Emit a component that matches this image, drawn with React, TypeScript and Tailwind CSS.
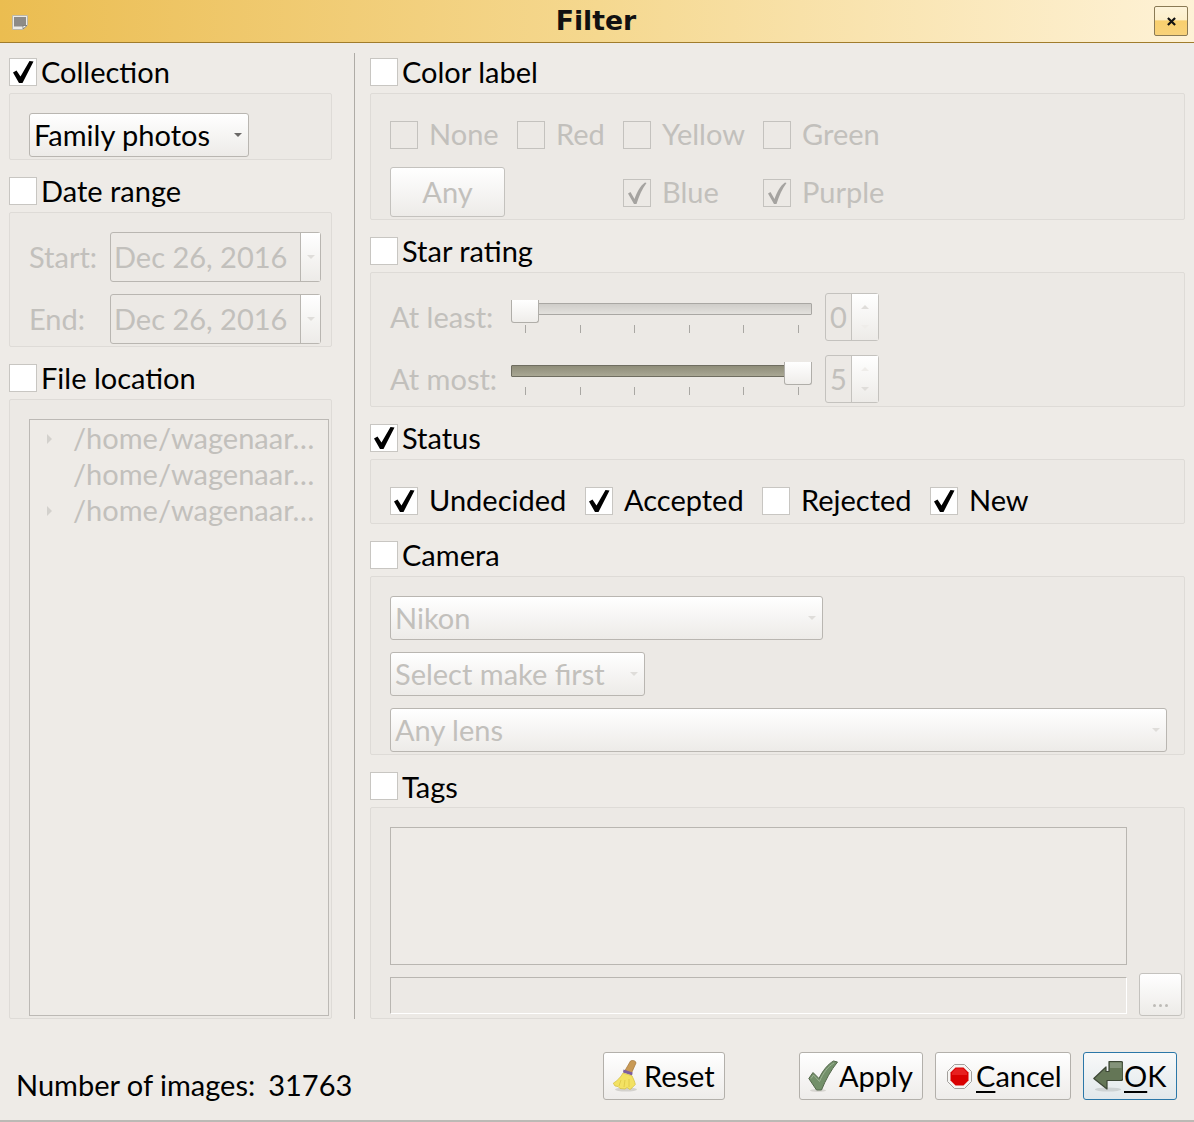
import React from "react";

const Check: React.FC<{ dim?: boolean }> = ({ dim }) => (
  <svg viewBox="0 0 28 28" className="absolute inset-[-1px] h-[28px] w-[28px]">
    {dim ? (
      <path d="M5 14.5 L7.5 13 L11.5 20 C14 13 17 7 22 3.5 L23.5 4 C19 10 16 17 13.5 25 L11 25 Z" fill="#a5a3a0" />
    ) : (
      <path d="M4 14.5 L7.5 12.5 L11.5 18.5 L20.5 3 L24.5 3.5 L13.5 25 L10 25 Z" fill="#000" />
    )}
  </svg>
);

type BoxProps = { checked?: boolean; disabled?: boolean };

const Box: React.FC<BoxProps> = ({ checked, disabled }) => (
  <span
    className={
      "relative block h-[28px] w-[28px] shrink-0 border " +
      (disabled ? "border-[#c4c2be]" : "border-[#c8c6c2] bg-white")
    }
  >
    {checked && <Check dim={disabled} />}
  </span>
);

const CheckItem: React.FC<BoxProps & { label: string }> = ({ label, checked, disabled }) => (
  <div className="flex h-[28px] items-center gap-[12px]">
    <Box checked={checked} disabled={disabled} />
    <span className={"ml-[-1px] mt-[-2px] " + (disabled ? "text-[#c2c0bc]" : "text-black")}>{label}</span>
  </div>
);

const Arrow: React.FC<{ dim?: boolean }> = ({ dim }) => (
  <span
    className={
      "block h-0 w-0 border-x-[4px] border-t-[4px] border-x-transparent " +
      (dim ? "border-t-[#dfddda]" : "border-t-[#6b6967]")
    }
  />
);

const Group: React.FC<{
  label: string;
  checked?: boolean;
  labelClassName?: string;
  className: string;
  children: React.ReactNode;
}> = ({ label, checked, labelClassName, className, children }) => (
  <section>
    <div className="flex h-[28px] items-center gap-[4px]">
      <Box checked={checked} />
      <span className={"text-black [font-variant-ligatures:common-ligatures_discretionary-ligatures] " + (labelClassName ?? "")}>
        {label}
      </span>
    </div>
    <div className={"mt-[7px] rounded-[2px] border border-[#dedbd7] bg-[#ece9e5] " + className}>
      {children}
    </div>
  </section>
);

const Combo: React.FC<{ text: string; width: string; active?: boolean }> = ({ text, width, active }) => (
  <div
    className={
      "flex h-[44px] items-center justify-between rounded-[3px] border border-[#b9b6b1] bg-gradient-to-b from-white to-[#edebe8] pl-[4px] pr-[6px] " +
      width
    }
  >
    <span className={active ? "text-black" : "text-[#c2c0bc]"}>{text}</span>
    <Arrow dim={!active} />
  </div>
);

const DateField: React.FC = () => (
  <div className="flex h-[50px] w-[211px] rounded-[3px] border border-[#b9b6b1]">
    <span className="flex w-[190px] items-center border-r border-[#b9b6b1] pl-[3px] text-[#c2c0bc]">
      Dec 26, 2016
    </span>
    <span className="flex flex-1 items-center justify-center bg-gradient-to-b from-white to-[#edebe8]">
      <Arrow dim />
    </span>
  </div>
);

const Ticks: React.FC = () => (
  <div className="mt-[10px] flex justify-between pl-[14px] pr-[13px]">
    {[0, 1, 2, 3, 4, 5].map((i) => (
      <span key={i} className="h-[8px] w-px bg-[#a9a7a3]" />
    ))}
  </div>
);

const SliderHandle: React.FC<{ className: string }> = ({ className }) => (
  <span
    className={
      "absolute top-[-4px] h-[23px] w-[28px] rounded-b-[3px] border border-[#b0aea9] border-t-0 bg-gradient-to-b from-white to-[#efedea] " +
      className
    }
  />
);

const Spin: React.FC<{ value: string; up?: boolean }> = ({ value, up }) => (
  <div className="flex h-[48px] w-[54px] rounded-[3px] border border-[#c4c2be]">
    <span className="flex w-[26px] items-center justify-center border-r border-[#c4c2be] text-[#c2c0bc]">
      {value}
    </span>
    <span className="flex flex-1 flex-col items-center justify-between bg-gradient-to-b from-white to-[#edebe8] py-[11px]">
      <span
        className={
          "block h-0 w-0 border-x-[4px] border-b-[4px] border-x-transparent " +
          (up ? "border-b-[#dfddda]" : "border-b-[#efedea]")
        }
      />
      <span
        className={
          "block h-0 w-0 border-x-[4px] border-t-[4px] border-x-transparent " +
          (up ? "border-t-[#efedea]" : "border-t-[#dfddda]")
        }
      />
    </span>
  </div>
);

const TreeRow: React.FC<{ arrow?: boolean }> = ({ arrow }) => (
  <div className="flex h-[36px] items-center">
    <span className="flex w-[44px] justify-start pl-[17px]">
      {arrow && (
        <span className="block h-0 w-0 border-y-[5px] border-l-[5px] border-y-transparent border-l-[#d3d1cd]" />
      )}
    </span>
    <span className="ml-[-1px] mt-[-2px] text-[#c2c0bc]">/home/wagenaar…</span>
  </div>
);

const Button: React.FC<{ className: string; focus?: boolean; children: React.ReactNode }> = ({
  className,
  focus,
  children,
}) => (
  <div
    className={
      "flex h-[48px] items-center rounded-[3px] border " +
      (focus
        ? "border-[#2b77a8] bg-gradient-to-b from-[#f8f9f9] to-[#e2e8eb] "
        : "border-[#b3b0ab] bg-gradient-to-b from-white to-[#eeecea] ") +
      className
    }
  >
    {children}
  </div>
);

const BroomIcon: React.FC = () => (
  <svg viewBox="0 0 24 32" className="h-[32px] w-[24px] shrink-0">
    <ellipse cx="13" cy="29.5" rx="11" ry="2" fill="#d3d1cd" />
    <path d="M17.5 1 C19 -0.3 23 0.5 23 3 L18.5 13 L12 10.5 Z" fill="#c99a55" stroke="#a3763a" strokeWidth="0.7" />
    <path d="M10.5 9.5 L19.7 12.5 L19 15.5 L10 12.5 Z" fill="#7d5f9e" />
    <path d="M10 13 L19 15.8 C20 18 22 22 22.3 24.5 C20 27 18 29 17 29.5 L14 27.5 L12 29 L7 28.5 L5 26.5 L2 26 L0.3 23.2 C4 21 8 17 10 13 Z" fill="#f3e263" stroke="#d3bd3c" strokeWidth="0.7" />
    <path d="M8 20 L6 26 M12 20 L11 27 M16 19 L16 27" stroke="#dcc644" strokeWidth="0.8" />
  </svg>
);

const CheckIcon: React.FC = () => (
  <svg viewBox="0 0 30 32" className="h-[32px] w-[30px] shrink-0">
    <ellipse cx="10" cy="30.5" rx="8" ry="1.5" fill="#d6d4d0" />
    <path d="M0.8 18.5 L5 12.5 L11 18.5 C14.5 11 19.5 4.5 25.5 1 L29.5 2 C23 10 17.5 20 13.5 30 L8.5 30 Z" fill="#73906a" stroke="#55684c" strokeWidth="1" strokeLinejoin="round" />
    <path d="M3 18.5 L5.5 15 L11.5 21.5 C15 13 20 6.5 26 3" fill="none" stroke="#9cb292" strokeWidth="1" />
  </svg>
);

const StopIcon: React.FC = () => (
  <svg viewBox="0 0 25 25" className="h-[25px] w-[25px] shrink-0">
    <path d="M7.5 0.5 H17.5 L24.5 7.5 V17.5 L17.5 24.5 H7.5 L0.5 17.5 V7.5 Z" fill="#f5f4f2" stroke="#a3a09c" strokeWidth="1" />
    <path d="M8.5 3.5 H16.5 L21.5 8.5 V16.5 L16.5 21.5 H8.5 L3.5 16.5 V8.5 Z" fill="#d90000" />
    <path d="M9 4.5 H16 L20 8.5 V11 H5 V8.5 Z" fill="#e72020" />
  </svg>
);

const OkIcon: React.FC = () => (
  <svg viewBox="0 0 30 32" className="h-[32px] w-[30px] shrink-0">
    <ellipse cx="15" cy="29.5" rx="13" ry="2" fill="#cdd2d3" />
    <path d="M16 1.5 H28 C29.5 1.5 30 2.5 30 4 V18 C30 19.5 29 20.5 27.5 20.5 H14 V29 L0.8 18.5 L13 7 V11.5 H16 Z" fill="#647656" stroke="#3d4735" strokeWidth="1.2" strokeLinejoin="round" />
    <path d="M17 2.5 H28.5 V8 H17 Z" fill="#84937a" />
  </svg>
);

const App: React.FC = () => {
  return (
    <div className="h-[1122px] w-[1194px] overflow-hidden bg-[#eeebe7] font-['Lato',sans-serif] text-[29px] leading-[34px]">
      <header className="relative flex h-[43px] items-center justify-center border-b border-[#a07c2c] bg-gradient-to-r from-[#ebbd50] via-[#f5d88f] to-[#fef2d6] pr-[2px]">
        <svg viewBox="0 0 16 15" className="absolute left-[12px] top-[15px] h-[15px] w-[16px]">
          <path d="M0.5 0.5 H15.5 V10 L11 14.5 H0.5 Z" fill="#ecebe6" stroke="#bdb9a8" />
          <rect x="2" y="2" width="12" height="9.5" fill="#8d8b87" />
          <path d="M11 14 V10.5 H15 Z" fill="#f4f3ef" stroke="#6f6d69" strokeWidth="0.7" />
        </svg>
        <h1 className="font-['DejaVu_Sans',sans-serif] text-[26.67px] font-bold leading-none text-[#111]">Filter</h1>
        <div className="absolute right-[6px] top-[6px] flex h-[30px] w-[34px] items-center justify-center rounded-[2px] border border-[#8a7a55] bg-[linear-gradient(#fdf3d9_0%,#fdefcb_45%,#f8cf6e_50%,#f8d27a_100%)]">
          <svg viewBox="0 0 10 10" className="h-[9px] w-[9px]">
            <path d="M1 1 L9 9 M9 1 L1 9" stroke="#111" strokeWidth="2.4" />
          </svg>
        </div>
      </header>

      <main className="flex h-[976px] pl-[9px] pt-[15px]">
        <div className="flex w-[323px] shrink-0 flex-col gap-[17px]">
          <Group label="Collection" checked className="h-[67px] pl-[19px] pt-[19px]">
            <Combo text="Family photos" width="w-[220px]" active />
          </Group>
          <Group label="Date range" className="flex h-[135px] flex-col gap-[12px] pl-[19px] pt-[19px]">
            <div className="flex items-center">
              <span className="w-[81px] text-[#c2c0bc]">Start:</span>
              <DateField />
            </div>
            <div className="flex items-center">
              <span className="w-[81px] text-[#c2c0bc]">End:</span>
              <DateField />
            </div>
          </Group>
          <Group label="File location" className="h-[620px] pl-[19px] pt-[19px]">
            <div className="h-[597px] w-[300px] border border-[#bcb9b5] bg-[#eeebe7] pt-[1px]">
              <TreeRow arrow />
              <TreeRow />
              <TreeRow arrow />
            </div>
          </Group>
        </div>

        <div className="mx-[15px] ml-[22px] mt-[-5px] h-[966px] w-px shrink-0 bg-[#aeaba6]" />

        <div className="flex w-[815px] shrink-0 flex-col gap-[17px]">
          <Group label="Color label" className="h-[127px] pl-[19px] pt-[27px]">
            <div className="grid grid-cols-[127px_106px_140px_1fr] items-center">
              <CheckItem label="None" disabled />
              <CheckItem label="Red" disabled />
              <CheckItem label="Yellow" disabled />
              <CheckItem label="Green" disabled />
            </div>
            <div className="mt-[18px] grid grid-cols-[233px_140px_1fr] items-center">
              <div className="flex h-[50px] w-[115px] items-center justify-center rounded-[3px] border border-[#c4c2be] bg-gradient-to-b from-white to-[#edebe8] text-[#c2c0bc]">
                Any
              </div>
              <div className="mt-[2px]">
                <CheckItem label="Blue" checked disabled />
              </div>
              <div className="mt-[2px]">
                <CheckItem label="Purple" checked disabled />
              </div>
            </div>
          </Group>

          <Group label="Star rating" className="flex h-[135px] flex-col gap-[14px] pl-[19px] pt-[20px]">
            <div className="flex h-[48px]">
              <span className="flex w-[121px] items-center text-[#c2c0bc]">At least:</span>
              <div className="w-[301px] pt-[10px]">
                <div className="relative h-[12px] rounded-[1px] border border-[#a9a7a3] bg-gradient-to-b from-[#cfcdc9] to-[#e3e1dd]">
                  <SliderHandle className="left-[-1px]" />
                </div>
                <Ticks />
              </div>
              <div className="ml-[13px]">
                <Spin value="0" up />
              </div>
            </div>
            <div className="flex h-[48px]">
              <span className="flex w-[121px] items-center text-[#c2c0bc]">At most:</span>
              <div className="w-[301px] pt-[10px]">
                <div className="relative h-[12px] rounded-[1px] border border-[#6f6d60] bg-gradient-to-b from-[#8f8d79] to-[#a9a794]">
                  <SliderHandle className="right-[-1px]" />
                </div>
                <Ticks />
              </div>
              <div className="ml-[13px]">
                <Spin value="5" />
              </div>
            </div>
          </Group>

          <Group label="Status" checked className="h-[65px] pl-[19px] pt-[27px]">
            <div className="grid grid-cols-[195px_177px_168px_1fr] items-center">
              <CheckItem label="Undecided" checked />
              <CheckItem label="Accepted" checked />
              <CheckItem label="Rejected" />
              <CheckItem label="New" checked />
            </div>
          </Group>

          <Group label="Camera" className="flex h-[179px] flex-col gap-[12px] pl-[19px] pt-[19px]">
            <Combo text="Nikon" width="w-[433px]" />
            <Combo text="Select make first" width="w-[255px]" />
            <Combo text="Any lens" width="w-[777px]" />
          </Group>

          <Group label="Tags" labelClassName="mt-[2px]" className="h-[212px] pl-[19px] pt-[19px]">
            <div className="h-[138px] w-[737px] border border-[#b9b6b1] bg-[#eeebe7]" />
            <div className="mt-[8px] flex items-start gap-[12px]">
              <div className="mt-[4px] h-[37px] w-[737px] border border-[#b9b6b1] border-b-white border-r-white" />
              <div className="flex h-[43px] w-[43px] items-end justify-center rounded-[3px] border border-[#c4c2be] bg-gradient-to-b from-white to-[#edebe8] pb-[8px]">
                <span className="flex gap-[3px]">
                  <span className="h-[3px] w-[3px] rounded-full bg-[#bdbbb7]" />
                  <span className="h-[3px] w-[3px] rounded-full bg-[#bdbbb7]" />
                  <span className="h-[3px] w-[3px] rounded-full bg-[#bdbbb7]" />
                </span>
              </div>
            </div>
          </Group>
        </div>
      </main>

      <footer className="flex h-[103px] border-b-2 border-[#bcb9b5] pl-[16px] pt-[33px]">
        <div className="mt-[9px] flex h-[48px] w-[587px] items-center gap-[13px] text-black">
          <span>Number of images:</span>
          <span>31763</span>
        </div>
        <Button className="w-[122px] gap-[7px] pl-[9px] text-black">
          <BroomIcon />
          <span>Reset</span>
        </Button>
        <Button className="ml-[74px] w-[124px] gap-[1px] pl-[8px] text-black">
          <CheckIcon />
          <span>Apply</span>
        </Button>
        <Button className="ml-[12px] w-[136px] gap-[4px] pl-[11px] text-black">
          <StopIcon />
          <span>
            <span className="underline decoration-2 underline-offset-[4px]">C</span>ancel
          </span>
        </Button>
        <Button focus className="ml-[12px] w-[94px] gap-[1px] pl-[9px] text-black">
          <OkIcon />
          <span>
            <span className="underline decoration-2 underline-offset-[4px]">O</span>K
          </span>
        </Button>
      </footer>
    </div>
  );
};

export default App;
